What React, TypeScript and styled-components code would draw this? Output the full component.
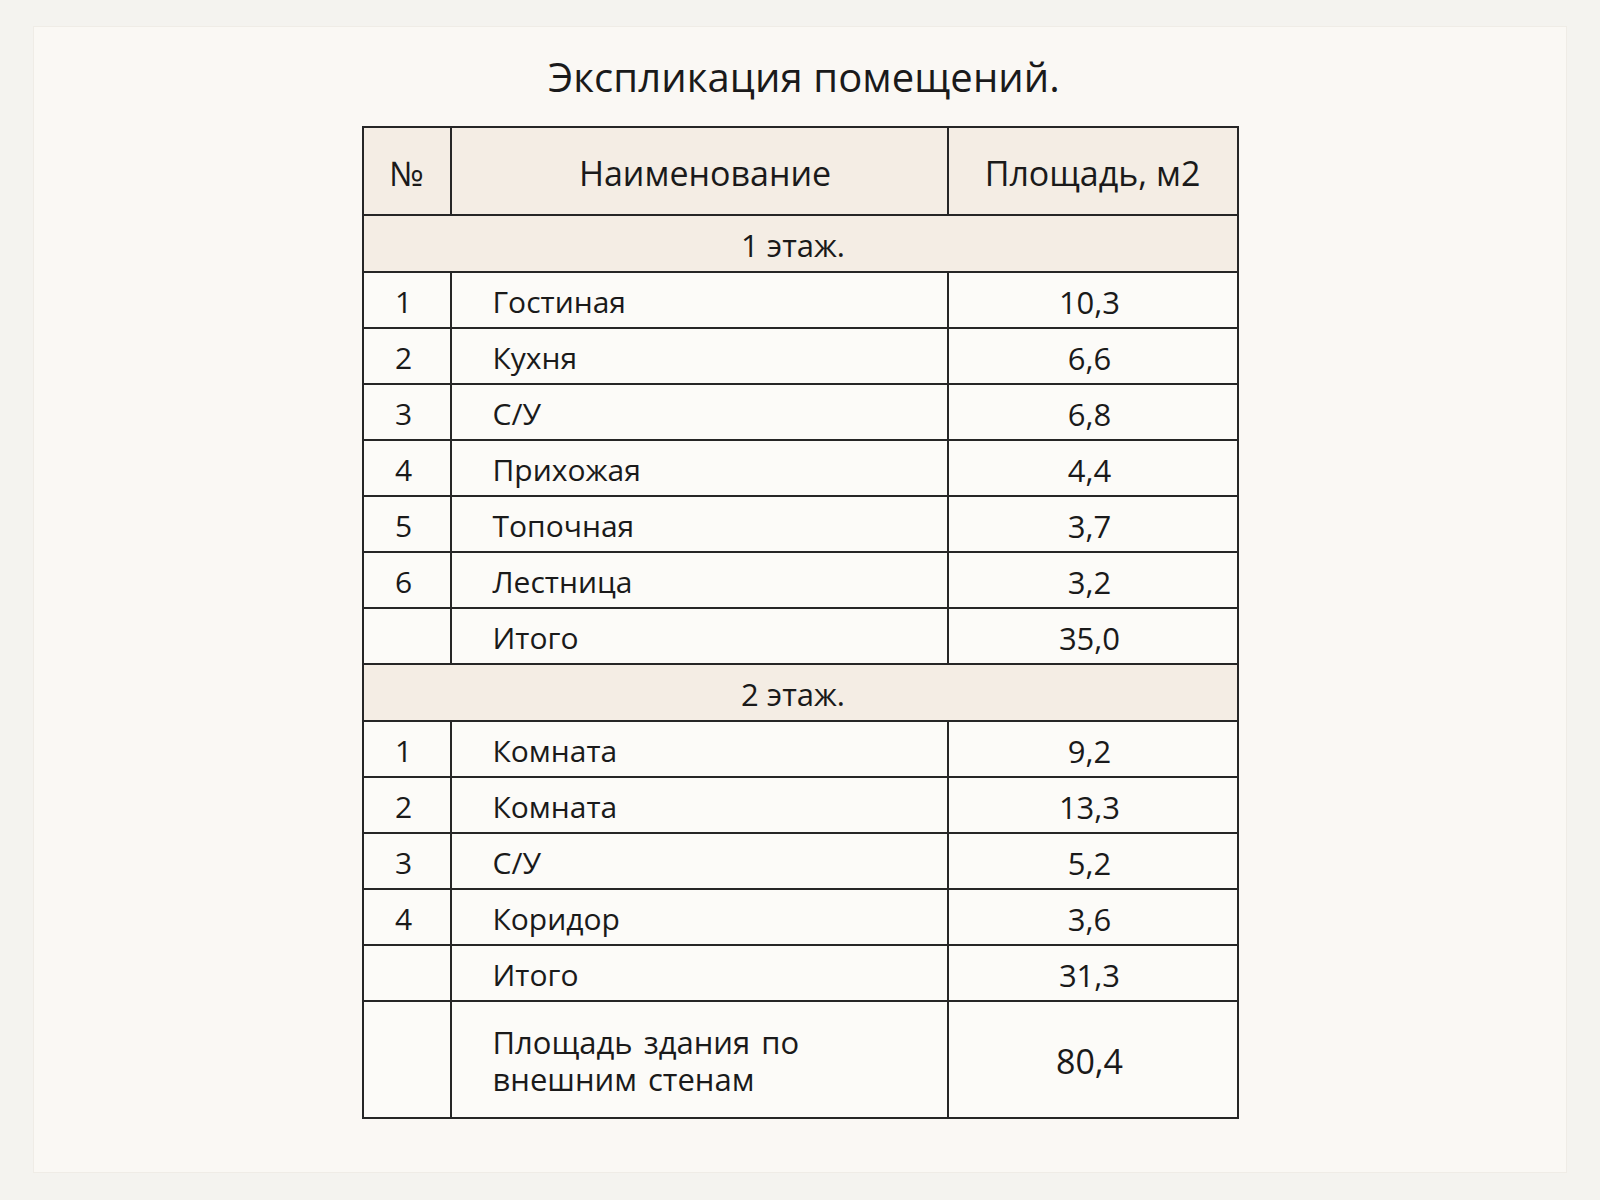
import styled, { createGlobalStyle } from 'styled-components';

const GlobalStyle = createGlobalStyle`
  html, body {
    margin: 0;
    padding: 0;
    background: #f4f3ef;
  }
  body {
    font-family: "Open Sans", "Noto Sans", sans-serif;
    color: #1f1f1f;
  }
`;

type Room = { no?: string; name: string; area: string };

const floors: { title: string; rooms: Room[] }[] = [
  {
    title: '1 этаж.',
    rooms: [
      { no: '1', name: 'Гостиная', area: '10,3' },
      { no: '2', name: 'Кухня', area: '6,6' },
      { no: '3', name: 'С/У', area: '6,8' },
      { no: '4', name: 'Прихожая', area: '4,4' },
      { no: '5', name: 'Топочная', area: '3,7' },
      { no: '6', name: 'Лестница', area: '3,2' },
      { name: 'Итого', area: '35,0' },
    ],
  },
  {
    title: '2 этаж.',
    rooms: [
      { no: '1', name: 'Комната', area: '9,2' },
      { no: '2', name: 'Комната', area: '13,3' },
      { no: '3', name: 'С/У', area: '5,2' },
      { no: '4', name: 'Коридор', area: '3,6' },
      { name: 'Итого', area: '31,3' },
    ],
  },
];

export default function App() {
  return (
    <>
      <GlobalStyle />
      <Page>
        <Sheet>
          <Title>Экспликация помещений.</Title>
          <Table>
            <colgroup>
              <col style={{ width: 88 }} />
              <col style={{ width: 497 }} />
              <col style={{ width: 290 }} />
            </colgroup>
            <thead>
              <tr>
                <HeadCell>№</HeadCell>
                <HeadCell $shift={6}>Наименование</HeadCell>
                <HeadCell>Площадь, м2</HeadCell>
              </tr>
            </thead>
            <tbody>
              {floors.map((floor) => (
                <FloorGroup key={floor.title} title={floor.title} rooms={floor.rooms} />
              ))}
              <Row $tall>
                <NumCell />
                <NameCell $large>
                  Площадь здания по
                  <br />
                  внешним стенам
                </NameCell>
                <AreaCell $large>80,4</AreaCell>
              </Row>
            </tbody>
          </Table>
        </Sheet>
      </Page>
    </>
  );
}

function FloorGroup({ title, rooms }: { title: string; rooms: Room[] }) {
  return (
    <>
      <SectionRow>
        <SectionCell colSpan={3}>{title}</SectionCell>
      </SectionRow>
      {rooms.map((room, i) => (
        <Row key={i}>
          <NumCell>{room.no}</NumCell>
          <NameCell>{room.name}</NameCell>
          <AreaCell>{room.area}</AreaCell>
        </Row>
      ))}
    </>
  );
}

const Page = styled.div`
  padding: 26px 33px 27px;
`;

const Sheet = styled.div`
  height: 1147px;
  box-sizing: border-box;
  background: #faf8f4;
  border: 1px solid #efece6;
  padding-top: 26px;
  display: flex;
  flex-direction: column;
  align-items: center;
`;

const Title = styled.h1`
  margin: 0 0 25px 8px;
  font-size: 40px;
  line-height: 48px;
  font-weight: 400;
  color: #1a1a1a;
  letter-spacing: 0.1px;
`;

const Table = styled.table`
  width: 875px;
  border-collapse: collapse;
  table-layout: fixed;
  background: #fcfbf8;
  border: 2px solid #262626;

  td,
  th {
    border: 2px solid #262626;
    padding: 0;
  }
`;

const HeadCell = styled.th<{ $shift?: number }>`
  height: 82px;
  background: #f4ede4;
  font-size: 34px;
  font-weight: 400;
  text-align: center;
  color: #1a1a1a;
  padding-left: ${(p) => (p.$shift ?? 0) * 2}px !important;
  padding-top: 4px !important;
`;

const SectionRow = styled.tr`
  height: 57px;
`;

const SectionCell = styled.td`
  background: #f4ede4;
  font-size: 31px;
  text-align: center;
  color: #1a1a1a;
  padding-top: 3px !important;
  padding-right: 14px !important;
`;

const Row = styled.tr<{ $tall?: boolean }>`
  height: ${(p) => (p.$tall ? '117px' : '56px')};
`;

const NumCell = styled.td`
  font-size: 30px;
  text-align: center;
  padding-right: 6px !important;
  padding-top: 3px !important;
  color: #1a1a1a;
`;

const NameCell = styled.td<{ $large?: boolean }>`
  font-size: ${(p) => (p.$large ? '31px' : '30px')};
  word-spacing: ${(p) => (p.$large ? '3px' : '0')};
  line-height: 37px;
  padding-left: 41px !important;
  padding-top: 3px !important;
  color: #1a1a1a;
`;

const AreaCell = styled.td<{ $large?: boolean }>`
  font-size: ${(p) => (p.$large ? '34px' : '31px')};
  text-align: center;
  padding-right: 6px !important;
  padding-top: 3px !important;
  color: #1a1a1a;
`;
